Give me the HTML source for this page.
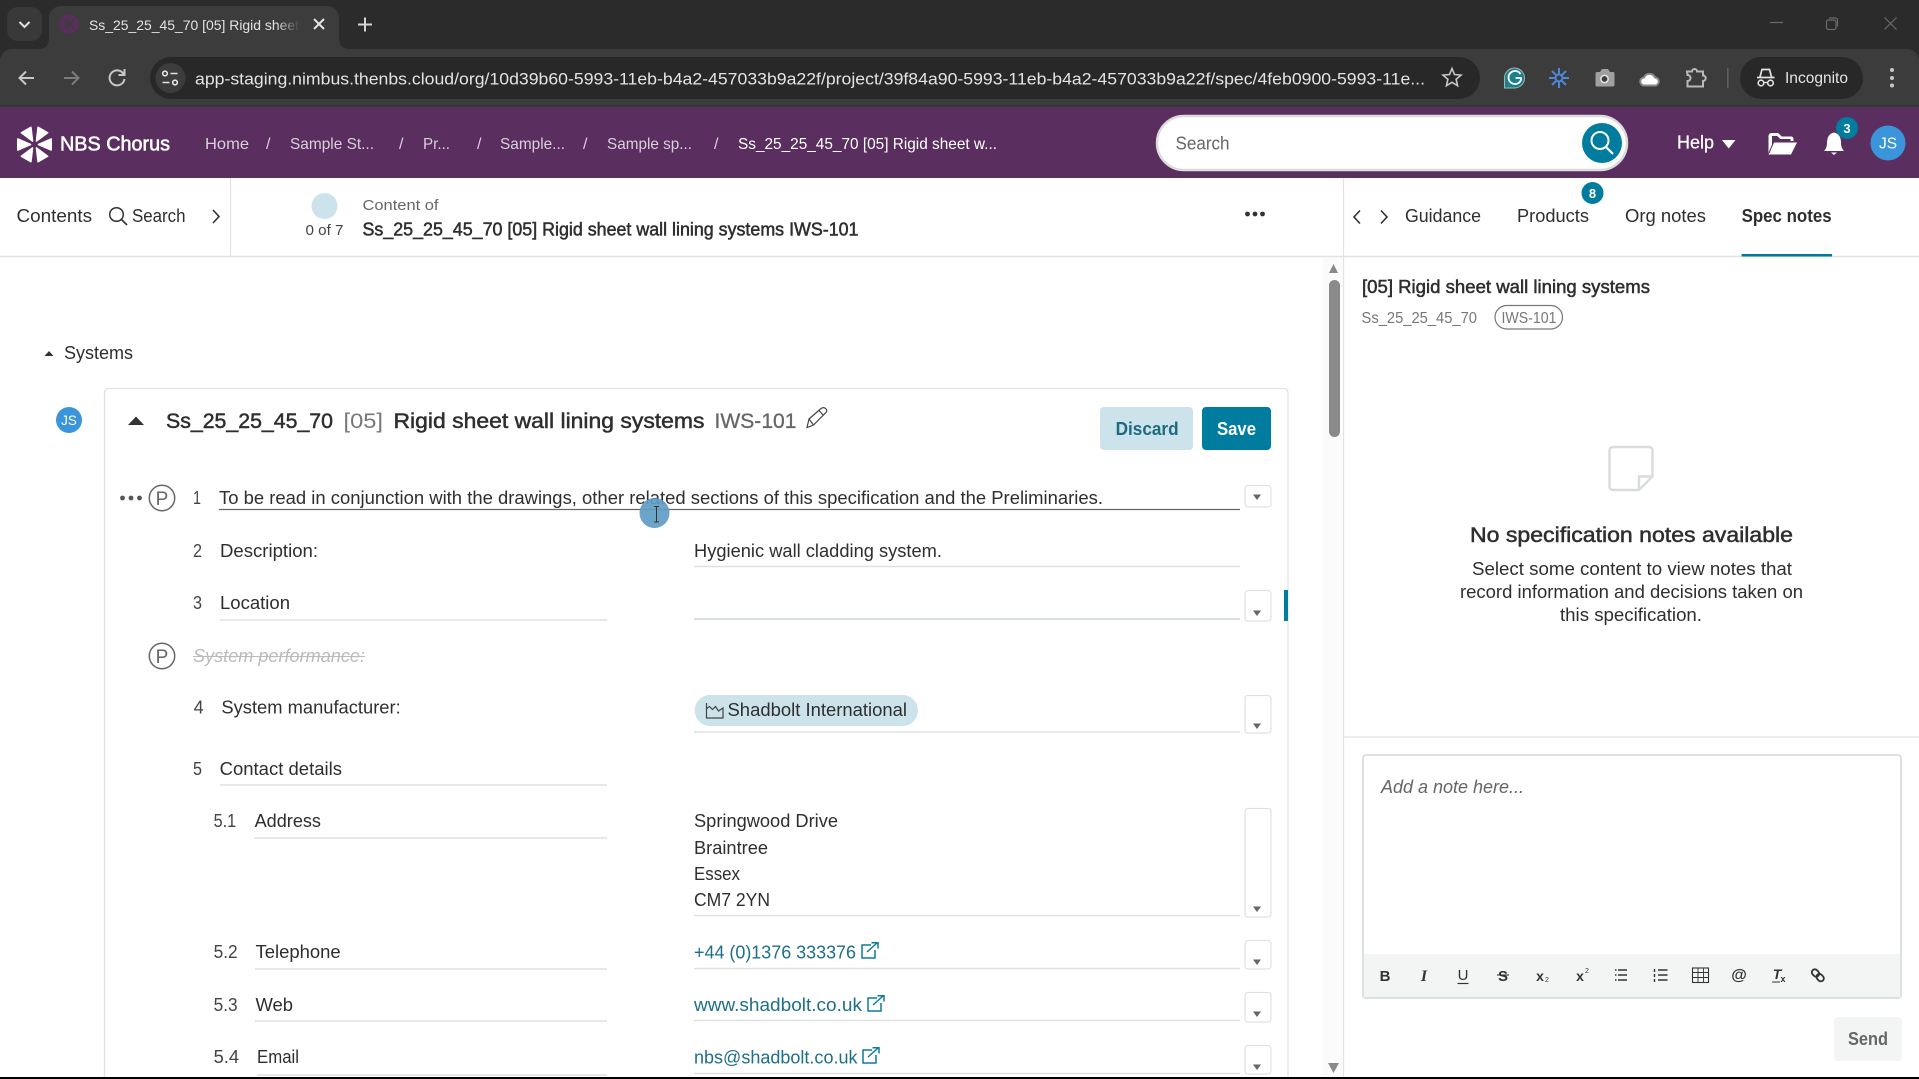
<!DOCTYPE html>
<html><head><meta charset="utf-8"><title>NBS Chorus</title>
<style>
html,body{margin:0;padding:0;background:#fff;overflow:hidden;width:1919px;height:1079px}
svg{display:block}
text{font-family:"Liberation Sans",Arial,sans-serif;fill:#2e2e2e;font-size:18.5px}
.m{stroke:#2e2e2e;stroke-width:.5px}
.lk{fill:#1d6f8a}
.g{fill:#6b6b6b}
.bc{fill:#d9d0dc;font-size:16px}
.ln{stroke:#dfe1e1;stroke-width:1.5;fill:none}
.dd{fill:#fff;stroke:#dfe2e2;stroke-width:1.2}
.tr{fill:#666}
.ext{fill:none;stroke:#0d7c9c;stroke-width:1.5}
.tb{font-size:15px;fill:#333}
</style></head><body>
<svg width="1919" height="1079" viewBox="0 0 1919 1079" xmlns="http://www.w3.org/2000/svg">
<defs><linearGradient id="fade" x1="0" x2="1" y1="0" y2="0"><stop offset="0" stop-color="#3c3c3c" stop-opacity="0"/><stop offset="1" stop-color="#3c3c3c"/></linearGradient></defs>
<rect width="1919" height="1079" fill="#fff"/>
<!-- browser chrome -->
<rect width="1919" height="60" fill="#2b2b2b"/>
<path d="M0,107 V61 a12,12 0 0 1 12,-12 H1907 a12,12 0 0 1 12,12 V107 Z" fill="#3c3c3c"/>
<rect y="105.5" width="1919" height="2" fill="#343434"/>
<rect x="7" y="7" width="35" height="34" rx="11" fill="#393939"/>
<path d="M19.5,22 L24.5,27 L29.5,22" fill="none" stroke="#e3e3e3" stroke-width="2"/>
<path d="M38,49 q11,0 11,-11 V18 a12,12 0 0 1 12,-12 H327 a12,12 0 0 1 12,12 V38 q0,11 11,11 Z" fill="#3c3c3c"/>
<g fill="#5a2d5e"><circle cx="69" cy="24" r="10"/></g><circle cx="69" cy="24" r="3" fill="#3c3c3c"/>
<g stroke="#3c3c3c" stroke-width="1"><path d="M59,24H79M69,14V34M62,17L76,31M76,17L62,31"/></g>
<text x="89" y="30" font-size="14" style="font-size:14px;fill:#e3e3e3" textLength="210" lengthAdjust="spacingAndGlyphs">Ss_25_25_45_70 [05] Rigid sheet</text>
<rect x="276" y="12" width="24" height="26" fill="url(#fade)"/>
<path d="M314,19 L324,29 M324,19 L314,29" stroke="#e3e3e3" stroke-width="2"/>
<path d="M358,24.5 H372 M365,17.5 V31.5" stroke="#d5d5d5" stroke-width="2"/>
<path d="M1770,22.5H1783" stroke="#6a6a6a" stroke-width="1.2"/>
<rect x="1826.5" y="20" width="9.5" height="9.5" fill="none" stroke="#6a6a6a" stroke-width="1.2" rx="2"/><path d="M1829,18 h6.5 a2,2 0 0 1 2,2 v6.5" fill="none" stroke="#6a6a6a" stroke-width="1.2"/>
<path d="M1884.5,17.5 L1896.5,29.5 M1896.5,17.5 L1884.5,29.5" stroke="#6a6a6a" stroke-width="1.2"/>
<path d="M34,78 H20 M26,71.5 L19.5,78 L26,84.5" fill="none" stroke="#c7c7c7" stroke-width="2"/>
<path d="M78,78 H64 M72,71.5 L78.5,78 L72,84.5" fill="none" stroke="#7c7c7c" stroke-width="2"/>
<path d="M123.5,74 A7.5,7.5 0 1 0 124.5,79 M124.5,69 V75 H118.5" fill="none" stroke="#c7c7c7" stroke-width="2"/>
<rect x="150" y="57" width="1330" height="42" rx="21" fill="#282828"/>
<circle cx="170.5" cy="78" r="15" fill="#3c3c3c"/>
<circle cx="165" cy="73.5" r="2.3" fill="none" stroke="#e3e3e3" stroke-width="1.6"/><path d="M170.5,73.5H177.5M162.5,82.5H169.5" stroke="#e3e3e3" stroke-width="1.6"/><circle cx="175" cy="82.5" r="2.3" fill="none" stroke="#e3e3e3" stroke-width="1.6"/>
<text x="195" y="84.5" style="font-size:17px;fill:#e3e3e3" textLength="1230" lengthAdjust="spacingAndGlyphs">app-staging.nimbus.thenbs.cloud/org/10d39b60-5993-11eb-b4a2-457033b9a22f/project/39f84a90-5993-11eb-b4a2-457033b9a22f/spec/4feb0900-5993-11e...</text>
<path d="M1452,68.5 L1454.5,74.5 1461,75.1 1456.1,79.3 1457.6,85.7 1452,82.3 1446.4,85.7 1447.9,79.3 1443,75.1 1449.5,74.5Z" fill="none" stroke="#c7c7c7" stroke-width="1.6"/>
<path d="M1504.5,88 V78 a10,10 0 1 1 10,10 Z" fill="#1d7f88" stroke="#9fb7bb" stroke-width="1"/>
<path d="M1520.5,74 A6.5,6.5 0 1 0 1521,80 V78 H1515.5" fill="none" stroke="#fff" stroke-width="1.8"/>
<g stroke="#4e86d8" stroke-width="2" fill="none"><path d="M1559,68V88M1549,78H1569M1552,71L1566,85M1566,71L1552,85"/><circle cx="1559" cy="78" r="3.5" fill="#3c3c3c"/></g>
<path d="M1597,72 h3 l2,-3 h6 l2,3 h3 a1.5,1.5 0 0 1 1.5,1.5 V85 a1.5,1.5 0 0 1 -1.5,1.5 H1597 a1.5,1.5 0 0 1 -1.5,-1.5 V73.5 a1.5,1.5 0 0 1 1.5,-1.5Z" fill="#a0a0a0"/><circle cx="1604.5" cy="79" r="3.6" fill="#3c3c3c" stroke="#e5e5e5" stroke-width="1.5"/>
<path d="M1644.5,85.5 a4,4 0 0 1 -.5,-8 a6,6 0 0 1 11,0 a4,4 0 0 1 -.5,8Z" fill="#fff" stroke="#8a8a8a" stroke-width="2"/>
<path d="M1687,71.5 H1692 a2.5,2.5 0 0 1 5,0 H1703 V75.5 a2.7,2.7 0 0 1 0,5.4 V86.5 H1687.5 V81 a3,3 0 0 0 0,-6 Z" fill="none" stroke="#b9b9b9" stroke-width="2"/>
<rect x="1727" y="68" width="1.6" height="20" fill="#5f5f5f"/>
<rect x="1740" y="57" width="123" height="42" rx="21" fill="#282828"/>
<path d="M1760,77 L1762,69.5 H1769.5 L1771.5,77 M1757,77.5 H1774.5" fill="none" stroke="#e3e3e3" stroke-width="1.7"/><circle cx="1761" cy="83" r="2.8" fill="none" stroke="#e3e3e3" stroke-width="1.6"/><circle cx="1770.5" cy="83" r="2.8" fill="none" stroke="#e3e3e3" stroke-width="1.6"/><path d="M1764,82.5h3.5" stroke="#e3e3e3" stroke-width="1.4"/>
<text x="1785" y="83" style="font-size:15.5px;fill:#e3e3e3" textLength="63" lengthAdjust="spacingAndGlyphs">Incognito</text>
<g fill="#c7c7c7"><circle cx="1892" cy="70" r="2"/><circle cx="1892" cy="78" r="2"/><circle cx="1892" cy="85.5" r="2"/></g>
<!-- purple header -->
<rect y="107" width="1919" height="71" fill="#5a2e5e"/>
<g fill="#fff" stroke="#fff" stroke-width="1.6" stroke-linejoin="round" transform="translate(.5 0)">
<path d="M34,140.5 L28.5,127.8 H39.5Z" transform="rotate(30 34 144.5)"/>
<path d="M34,140.5 L28.5,127.8 H39.5Z" transform="rotate(90 34 144.5)"/>
<path d="M34,140.5 L28.5,127.8 H39.5Z" transform="rotate(150 34 144.5)"/>
<path d="M34,140.5 L28.5,127.8 H39.5Z" transform="rotate(210 34 144.5)"/>
<path d="M34,140.5 L28.5,127.8 H39.5Z" transform="rotate(270 34 144.5)"/>
<path d="M34,140.5 L28.5,127.8 H39.5Z" transform="rotate(330 34 144.5)"/>
</g>
<text x="60" y="150.5" style="font-size:20px;fill:#fff;stroke:#fff;stroke-width:.55px" textLength="110" lengthAdjust="spacingAndGlyphs">NBS Chorus</text>
<text class="bc" x="205" y="149" textLength="44" lengthAdjust="spacingAndGlyphs">Home</text>
<text class="bc" x="266" y="149">/</text>
<text class="bc" x="290" y="149" textLength="84" lengthAdjust="spacingAndGlyphs">Sample St...</text>
<text class="bc" x="399" y="149">/</text>
<text class="bc" x="423" y="149" textLength="27" lengthAdjust="spacingAndGlyphs">Pr...</text>
<text class="bc" x="477" y="149">/</text>
<text class="bc" x="500" y="149" textLength="65" lengthAdjust="spacingAndGlyphs">Sample...</text>
<text class="bc" x="583" y="149">/</text>
<text class="bc" x="607" y="149" textLength="85" lengthAdjust="spacingAndGlyphs">Sample sp...</text>
<text class="bc" x="714" y="149">/</text>
<text x="738" y="149" style="font-size:16px;fill:#fff" textLength="259" lengthAdjust="spacingAndGlyphs">Ss_25_25_45_70 [05] Rigid sheet w...</text>
<rect x="1157" y="116" width="470" height="54" rx="27" fill="#fff" stroke="#dcdcdc" stroke-width="2.5"/>
<text x="1175.5" y="149.5" style="font-size:18px;fill:#666" textLength="54" lengthAdjust="spacingAndGlyphs">Search</text>
<circle cx="1602" cy="143" r="20" fill="#007c9e"/>
<circle cx="1600" cy="140.5" r="8.5" fill="none" stroke="#fff" stroke-width="2"/><path d="M1606,147 L1613,154" stroke="#fff" stroke-width="2.2"/>
<text x="1677" y="148.5" style="font-size:18px;fill:#fff;stroke:#fff;stroke-width:.25px" textLength="37" lengthAdjust="spacingAndGlyphs">Help</text>
<path d="M1722,140 H1735.5 L1728.7,148.5Z" fill="#fff"/>
<path d="M1769,153 V136 a2.5,2.5 0 0 1 2.5,-2.5 H1778 l3.5,3.5 H1791 a2,2 0 0 1 2,2 v1.5 h-2 v-2 h-10.5 l-3,-3 h-6 v15" fill="#fff" stroke="#fff" stroke-width="1"/>
<path d="M1774,142.5 H1797 L1791,154.5 H1768.5 Z" fill="#fff"/><path d="M1769,153 L1774,141" stroke="#5a2e5e" stroke-width="1"/>
<path d="M1824,151 q3,-3 3,-8 q0,-9 7,-10.5 q7,1.5 7,10.5 q0,5 3,8 Z" fill="#fff"/><path d="M1831,152.5 H1837 L1834,155Z" fill="#fff"/>
<circle cx="1847" cy="128" r="11" fill="#007c9e"/>
<text x="1847" y="133" text-anchor="middle" style="font-size:13px;font-weight:bold;fill:#fff">3</text>
<circle cx="1888" cy="143" r="17.5" fill="#3b95db"/>
<text x="1888" y="148.5" text-anchor="middle" style="font-size:15.5px;fill:#fff">JS</text>
<!-- second row -->
<path d="M0,256.5 H1919" stroke="#e2e4e4" stroke-width="1.5"/>
<path d="M230.5,178 V256 M1343.5,178 V1077" stroke="#e2e4e4" stroke-width="1.2"/>
<text x="16.5" y="222" style="font-size:18px" textLength="75.5" lengthAdjust="spacingAndGlyphs">Contents</text>
<circle cx="116.5" cy="214.5" r="6.8" fill="none" stroke="#333" stroke-width="1.5"/><path d="M121.5,219.5 L127,225" stroke="#333" stroke-width="1.6"/>
<text x="132" y="222" style="font-size:18px" textLength="53.5" lengthAdjust="spacingAndGlyphs">Search</text>
<path d="M213,210 L219,216.5 L213,223" fill="none" stroke="#333" stroke-width="1.6"/>
<circle cx="324.5" cy="206" r="13" fill="#cce3ec"/>
<text x="305.5" y="235" style="font-size:15px;fill:#444" textLength="38" lengthAdjust="spacingAndGlyphs">0 of 7</text>
<text x="362.5" y="210" style="font-size:15px;fill:#666" textLength="76" lengthAdjust="spacingAndGlyphs">Content of</text>
<text class="m" x="362.5" y="235.5" style="font-size:18px" textLength="496" lengthAdjust="spacingAndGlyphs">Ss_25_25_45_70 [05] Rigid sheet wall lining systems IWS-101</text>
<g fill="#333"><circle cx="1247.5" cy="214" r="2.4"/><circle cx="1255" cy="214" r="2.4"/><circle cx="1262.5" cy="214" r="2.4"/></g>
<path d="M1360,210.5 L1354,217 L1360,223.5 M1381,210.5 L1387,217 L1381,223.5" fill="none" stroke="#333" stroke-width="1.6"/>
<text x="1405" y="222" style="font-size:18px" textLength="76" lengthAdjust="spacingAndGlyphs">Guidance</text>
<text x="1517" y="222" style="font-size:18px" textLength="72" lengthAdjust="spacingAndGlyphs">Products</text>
<circle cx="1592.5" cy="193" r="11" fill="#007c9e"/>
<text x="1592.5" y="198" text-anchor="middle" style="font-size:13px;font-weight:bold;fill:#fff">8</text>
<text x="1625" y="222" style="font-size:18px" textLength="81" lengthAdjust="spacingAndGlyphs">Org notes</text>
<text x="1741.6" y="222" style="font-size:18px;font-weight:bold" textLength="90" lengthAdjust="spacingAndGlyphs">Spec notes</text>
<rect x="1741.6" y="254" width="90.5" height="2.5" fill="#007c9e"/>
<!-- right panel -->
<text class="m" x="1362" y="293" style="font-size:18px" textLength="288" lengthAdjust="spacingAndGlyphs">[05] Rigid sheet wall lining systems</text>
<text x="1361.5" y="323" style="font-size:15.5px;fill:#777" textLength="115.5" lengthAdjust="spacingAndGlyphs">Ss_25_25_45_70</text>
<rect x="1495" y="305.5" width="67.5" height="23.5" rx="11.7" fill="#fff" stroke="#777" stroke-width="1.2"/>
<text x="1501.5" y="323" style="font-size:15.5px;fill:#777" textLength="55" lengthAdjust="spacingAndGlyphs">IWS-101</text>
<path d="M1613,447 H1649 a3.5,3.5 0 0 1 3.5,3.5 V476.5 L1639,490 H1613 a3.5,3.5 0 0 1 -3.5,-3.5 V450.5 a3.5,3.5 0 0 1 3.5,-3.5 Z M1639,490 V476.5 H1652.5" fill="none" stroke="#d8dcdc" stroke-width="2.4"/>
<text class="m" x="1470" y="542" style="font-size:21px" textLength="323" lengthAdjust="spacingAndGlyphs">No specification notes available</text>
<text x="1472" y="575" style="font-size:18px" textLength="320" lengthAdjust="spacingAndGlyphs">Select some content to view notes that</text>
<text x="1460" y="598" style="font-size:18px" textLength="343" lengthAdjust="spacingAndGlyphs">record information and decisions taken on</text>
<text x="1560" y="621" style="font-size:18px" textLength="142" lengthAdjust="spacingAndGlyphs">this specification.</text>
<path d="M1344,737 H1919" stroke="#e2e4e4" stroke-width="1.3"/>
<rect x="1363" y="755" width="538" height="243" rx="3" fill="#fff" stroke="#dde1e1" stroke-width="2"/>
<rect x="1364" y="954" width="536" height="43" fill="#f3f5f5"/>
<text x="1381" y="793" style="font-size:18px;font-style:italic;fill:#666" textLength="143" lengthAdjust="spacingAndGlyphs">Add a note here...</text>
<text class="tb" x="1385" y="981" text-anchor="middle" style="font-size:15px;font-weight:bold">B</text>
<text class="tb" x="1424" y="981" text-anchor="middle" style="font-size:16px;font-style:italic;font-weight:bold;font-family:'Liberation Serif',serif">I</text>
<text class="tb" x="1463" y="980" text-anchor="middle" style="font-size:15px">U</text><path d="M1457.5,983.5H1468.5" stroke="#333" stroke-width="1.2"/>
<text class="tb" x="1503" y="981" text-anchor="middle" style="font-size:15px;font-weight:bold">S</text><path d="M1497,975H1509" stroke="#333" stroke-width="1.1"/>
<text class="tb" x="1540" y="981" text-anchor="middle" style="font-size:14px;font-weight:bold">x</text><text class="tb" x="1547" y="982" text-anchor="middle" style="font-size:7px">2</text>
<text class="tb" x="1580" y="981" text-anchor="middle" style="font-size:14px;font-weight:bold">x</text><text class="tb" x="1587" y="973" text-anchor="middle" style="font-size:7px">2</text>
<path d="M1618,970H1627M1618,975H1627M1618,980H1627" stroke="#333" stroke-width="1.5"/><path d="M1615,970h1.5M1615,975h1.5M1615,980h1.5" stroke="#333" stroke-width="1.5"/>
<path d="M1658,970H1667.5M1658,975H1667.5M1658,980H1667.5" stroke="#333" stroke-width="1.5"/><path d="M1654.5,969v3M1654.5,974v3M1654.5,979v3" stroke="#333" stroke-width="1.4"/>
<rect x="1692.5" y="968" width="16" height="14.5" fill="none" stroke="#333" stroke-width="1.1"/><path d="M1692.5,972.5H1708.5M1692.5,977.5H1708.5M1698,968V982.5M1703.5,968V982.5" stroke="#333" stroke-width=".9"/>
<text class="tb" x="1739" y="980" text-anchor="middle" style="font-size:16px;font-weight:bold">@</text>
<text class="tb" x="1777" y="979" text-anchor="middle" style="font-size:14px;font-style:italic;font-weight:bold">T</text><text class="tb" x="1783" y="982" text-anchor="middle" style="font-size:9px;font-weight:bold">x</text><path d="M1772,982H1780" stroke="#333" stroke-width="1"/>
<g fill="none" stroke="#333" stroke-width="1.8" transform="rotate(45 1818 975.5)"><rect x="1810.5" y="972.5" width="8" height="6" rx="3"/><rect x="1817" y="972.5" width="8" height="6" rx="3"/></g>
<rect x="1834" y="1017" width="68" height="44" rx="4" fill="#f3f5f5"/>
<text x="1848" y="1045" style="font-size:18px;font-weight:bold;fill:#666" textLength="40" lengthAdjust="spacingAndGlyphs">Send</text>
<!-- main -->
<rect x="1323" y="257.5" width="20" height="819.5" fill="#fbfbfb"/>
<path d="M1329,273 L1333.5,264 L1338,273Z" fill="#8a8a8a"/>
<rect x="1329" y="280" width="11" height="157" rx="5.5" fill="#8a8a8a"/>
<path d="M1328,1063 H1339 L1333.5,1073Z" fill="#8a8a8a"/>
<path d="M44.5,356 L49,351 L53.5,356Z" fill="#333"/>
<text x="64" y="359" style="font-size:18px" textLength="69" lengthAdjust="spacingAndGlyphs">Systems</text>
<path d="M104.5,1077 V392.5 a4,4 0 0 1 4,-4 H1284 a4,4 0 0 1 4,4 V1077" fill="none" stroke="#e0e2e2" stroke-width="1.3"/>
<circle cx="69" cy="420" r="13" fill="#3b95db"/>
<text x="69" y="425" text-anchor="middle" style="font-size:13.5px;fill:#fff">JS</text>
<path d="M128,425 L136,416.5 L144,425Z" fill="#333"/>
<text class="m" x="166" y="428" style="font-size:21.5px" textLength="167" lengthAdjust="spacingAndGlyphs">Ss_25_25_45_70</text>
<text x="343.5" y="428" style="font-size:21.5px;fill:#777" textLength="39.5" lengthAdjust="spacingAndGlyphs">[05]</text>
<text class="m" x="393.5" y="428" style="font-size:21.5px" textLength="311" lengthAdjust="spacingAndGlyphs">Rigid sheet wall lining systems</text>
<text x="714.5" y="428" style="font-size:21.5px;fill:#666;stroke:#666;stroke-width:.3px" textLength="82" lengthAdjust="spacingAndGlyphs">IWS-101</text>
<path d="M807,427.5 L809,419 L821,408.5 Q824,406.5 826,409 Q828,411 825,413.5 L813.5,425 Z M809,419 L813.5,425 M819,410.5 L823.5,415.5" fill="none" stroke="#444" stroke-width="1.2"/>
<rect x="1100" y="407" width="93" height="43" rx="4" fill="#cce3ec"/>
<text x="1115.6" y="435" style="font-size:18px;font-weight:bold;fill:#1f6a80" textLength="63" lengthAdjust="spacingAndGlyphs">Discard</text>
<rect x="1202" y="407" width="69" height="43" rx="4" fill="#007c9e"/>
<text x="1217" y="435" style="font-size:18px;font-weight:bold;fill:#fff" textLength="39" lengthAdjust="spacingAndGlyphs">Save</text>
<g fill="#555"><circle cx="122.5" cy="498" r="2.4"/><circle cx="131" cy="498" r="2.4"/><circle cx="139.5" cy="498" r="2.4"/></g>
<circle cx="162" cy="498" r="12.7" fill="#fff" stroke="#666" stroke-width="1.5"/>
<text x="162" y="505" text-anchor="middle" style="font-size:19px;fill:#666">P</text>
<text x="193" y="504" style="fill:#444" textLength="8" lengthAdjust="spacingAndGlyphs">1</text>
<text x="219" y="504" textLength="884" lengthAdjust="spacingAndGlyphs">To be read in conjunction with the drawings, other related sections of this specification and the Preliminaries.</text>
<path d="M219,509.5 H1240" stroke="#666" stroke-width="1.3"/>
<rect class="dd" x="1245" y="485.5" width="26" height="21.5" rx="3"/><path class="tr" d="M1253,494.5 H1261 L1257,500Z"/>
<text x="193" y="557" style="fill:#444" textLength="9" lengthAdjust="spacingAndGlyphs">2</text>
<text x="220" y="557" textLength="98" lengthAdjust="spacingAndGlyphs">Description:</text>
<text x="694" y="557" textLength="248" lengthAdjust="spacingAndGlyphs">Hygienic wall cladding system.</text>
<path class="ln" d="M694,566.5 H1240"/>
<text x="193" y="609" style="fill:#444" textLength="9" lengthAdjust="spacingAndGlyphs">3</text>
<text x="220" y="609" textLength="70" lengthAdjust="spacingAndGlyphs">Location</text>
<path class="ln" d="M220,620 H607"/>
<path d="M694,619 H1240" stroke="#d8dfdf" stroke-width="2"/>
<rect class="dd" x="1245" y="590.5" width="26" height="30.5" rx="3"/><path class="tr" d="M1253,610.5 H1261 L1257,616Z"/>
<rect x="1284" y="590" width="4" height="31" fill="#007c9e"/>
<circle cx="162" cy="656" r="12.7" fill="#fff" stroke="#666" stroke-width="1.5"/>
<text x="162" y="663" text-anchor="middle" style="font-size:19px;fill:#666">P</text>
<text x="193" y="662" style="fill:#bbb;font-style:italic" textLength="172" lengthAdjust="spacingAndGlyphs">System performance:</text>
<path d="M193,656.5H365" stroke="#bbb" stroke-width="1.1"/>
<text x="193.6" y="713.5" style="fill:#444" textLength="10" lengthAdjust="spacingAndGlyphs">4</text>
<text x="221.4" y="713.5" textLength="179.3" lengthAdjust="spacingAndGlyphs">System manufacturer:</text>
<rect x="694.6" y="695" width="223.4" height="31" rx="15.5" fill="#cce3ec"/>
<path d="M706.5,703 V718 H723 V708 l-4.5,3 -3,-4.5 -3,3 -3,-3 -3.5,2.5" fill="none" stroke="#444" stroke-width="1.2"/>
<text x="727.5" y="716" textLength="179.5" lengthAdjust="spacingAndGlyphs">Shadbolt International</text>
<path class="ln" d="M694,732 H1240"/>
<rect class="dd" x="1245" y="695.5" width="26" height="37.5" rx="3"/><path class="tr" d="M1253,723.5 H1261 L1257,729Z"/>
<text x="193" y="775" style="fill:#444" textLength="9" lengthAdjust="spacingAndGlyphs">5</text>
<text x="219.6" y="775" textLength="122.4" lengthAdjust="spacingAndGlyphs">Contact details</text>
<path class="ln" d="M220,785 H607"/>
<text x="213.6" y="827" style="fill:#444" textLength="22.5" lengthAdjust="spacingAndGlyphs">5.1</text>
<text x="254.6" y="827" textLength="66.4" lengthAdjust="spacingAndGlyphs">Address</text>
<path class="ln" d="M254,838 H607"/>
<text x="694" y="827" textLength="144" lengthAdjust="spacingAndGlyphs">Springwood Drive</text>
<text x="694" y="854" textLength="74" lengthAdjust="spacingAndGlyphs">Braintree</text>
<text x="694" y="880" textLength="46" lengthAdjust="spacingAndGlyphs">Essex</text>
<text x="694" y="906" textLength="76" lengthAdjust="spacingAndGlyphs">CM7 2YN</text>
<path class="ln" d="M694,915.5 H1240"/>
<rect class="dd" x="1245" y="808.5" width="26" height="108.5" rx="3"/><path class="tr" d="M1253,906.5 H1261 L1257,912Z"/>
<text x="213.6" y="958" style="fill:#444" textLength="24" lengthAdjust="spacingAndGlyphs">5.2</text>
<text x="255.5" y="958" textLength="85.2" lengthAdjust="spacingAndGlyphs">Telephone</text>
<path class="ln" d="M255,969 H607"/>
<text class="lk" x="694" y="958.5" textLength="162" lengthAdjust="spacingAndGlyphs">+44 (0)1376 333376</text>
<path class="ext" transform="translate(861 942)" d="M10,3 H1 V16 H14 V8 M6,10 L16,1 M10.5,0.8 H17 V6.5"/>
<path class="ln" d="M694,968.5 H1240"/>
<rect class="dd" x="1245" y="940.5" width="26" height="28.5" rx="3"/><path class="tr" d="M1253,959.5 H1261 L1257,965Z"/>
<text x="213.6" y="1011" style="fill:#444" textLength="24" lengthAdjust="spacingAndGlyphs">5.3</text>
<text x="255.5" y="1011" textLength="37.5" lengthAdjust="spacingAndGlyphs">Web</text>
<path class="ln" d="M255,1021 H607"/>
<text class="lk" x="694" y="1011" textLength="168" lengthAdjust="spacingAndGlyphs">www.shadbolt.co.uk</text>
<path class="ext" transform="translate(867 995)" d="M10,3 H1 V16 H14 V8 M6,10 L16,1 M10.5,0.8 H17 V6.5"/>
<path class="ln" d="M694,1020.5 H1240"/>
<rect class="dd" x="1245" y="992.5" width="26" height="29.5" rx="3"/><path class="tr" d="M1253,1011.5 H1261 L1257,1017Z"/>
<text x="213.6" y="1063" style="fill:#444" textLength="25.5" lengthAdjust="spacingAndGlyphs">5.4</text>
<text x="257" y="1063" textLength="42" lengthAdjust="spacingAndGlyphs">Email</text>
<path class="ln" d="M257,1075 H607"/>
<text class="lk" x="694" y="1063.5" textLength="163.5" lengthAdjust="spacingAndGlyphs">nbs@shadbolt.co.uk</text>
<path class="ext" transform="translate(862 1047)" d="M10,3 H1 V16 H14 V8 M6,10 L16,1 M10.5,0.8 H17 V6.5"/>
<path class="ln" d="M694,1073.5 H1240"/>
<rect class="dd" x="1245" y="1045.5" width="26" height="28.5" rx="3"/><path class="tr" d="M1253,1064.5 H1261 L1257,1070Z"/>
<!-- touch cursor -->
<circle cx="654.5" cy="513" r="15" fill="#5f9cc5" fill-opacity=".92"/>
<path d="M654,506.5 h5 M656.5,506.5 V522 M654,522 h5" stroke="#333" stroke-width="1" fill="none"/>
<rect y="1077" width="1919" height="2" fill="#000"/>
</svg>
</body></html>
